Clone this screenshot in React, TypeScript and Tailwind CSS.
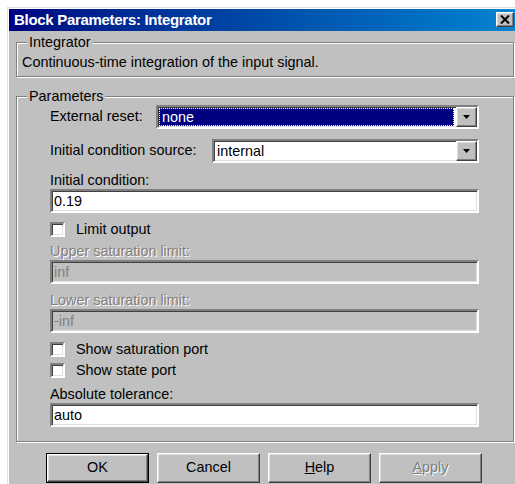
import React from "react";

// classic 3D borders
const SUNKEN =
  "border-2 border-t-[#808080] border-l-[#808080] border-b-white border-r-white shadow-[inset_1px_1px_0_#404040,inset_-1px_-1px_0_#dfdfdf]";
const RAISED =
  "border border-t-white border-l-white border-b-[#404040] border-r-[#404040] shadow-[inset_-1px_-1px_0_#808080,inset_1px_1px_0_#dfdfdf]";
const ETCHED =
  "border border-[#808080] shadow-[1px_1px_0_#fff,inset_1px_1px_0_#fff]";
const DISABLED_TEXT = "text-[#808080] [text-shadow:1px_1px_0_#fff]";

function DropButton() {
  return (
    <div
      className={`w-[21px] h-[20px] bg-[#c0c0c0] ${RAISED} flex items-center justify-center shrink-0`}
    >
      <svg width="9" height="5" viewBox="0 0 9 5">
        <path d="M1 0h7L4.5 4z" fill="#000" />
      </svg>
    </div>
  );
}

function Combo({
  value,
  focused,
  className,
}: {
  value: string;
  focused?: boolean;
  className?: string;
}) {
  return (
    <div className={`h-[24px] bg-white flex ${SUNKEN} ${className ?? ""}`}>
      {focused ? (
        <div className="flex-1 m-[1px] mr-[2px] bg-[#000080] text-white border border-dotted border-[#ffff99] pl-[2px] leading-[16px]">
          {value}
        </div>
      ) : (
        <div className="flex-1 pl-[3px] leading-[20px]">{value}</div>
      )}
      <DropButton />
    </div>
  );
}

function TextBox({ value, disabled }: { value: string; disabled?: boolean }) {
  return (
    <div
      className={`h-[24px] mt-[1px] pl-[2px] leading-[20px] ${SUNKEN} ${
        disabled ? "bg-[#c0c0c0] text-[#808080]" : "bg-white"
      }`}
    >
      {value}
    </div>
  );
}

function Check({ label, className }: { label: string; className?: string }) {
  return (
    <div className={`flex items-center h-[16px] ${className ?? ""}`}>
      <div className={`w-[15px] h-[15px] bg-white ${SUNKEN}`} />
      <span className="ml-[11px] leading-[16px]">{label}</span>
    </div>
  );
}

function Button({
  children,
  isDefault,
}: {
  children: React.ReactNode;
  isDefault?: boolean;
}) {
  return (
    <div
      className={`w-[103px] h-[30px] ${
        isDefault ? "border border-black" : ""
      } flex`}
    >
      <div
        className={`flex-1 ${RAISED} bg-[#c0c0c0] flex items-center justify-center`}
      >
        {children}
      </div>
    </div>
  );
}

export default function App() {
  return (
    <div className="w-[515px] h-[484px] bg-white pt-[7px] pl-[7px] overflow-hidden font-['Liberation_Sans',Arial,sans-serif] text-[14.4px] text-black">
      <div className="w-[510px] h-[490px] bg-[#c0c0c0] border-t border-l border-[#dfdfdf] shadow-[inset_1px_1px_0_#fff] pt-[1px] pl-[1px]">
        {/* title bar */}
        <div className="h-[22px] flex items-start bg-linear-to-r from-[#000080] to-[#1084d0]">
          <span className="pl-[5px] text-white font-bold text-[15px] tracking-[-0.3px] leading-[22px]">
            Block Parameters: Integrator
          </span>
          <div
            className={`ml-auto mr-[3px] mt-[3px] w-[18px] h-[15px] bg-[#c0c0c0] ${RAISED} flex items-center justify-center`}
          >
            <svg width="10" height="9" viewBox="0 0 10 9">
              <path
                d="M1 0.5L9 8.5M9 0.5L1 8.5"
                stroke="#000"
                strokeWidth="2"
              />
            </svg>
          </div>
        </div>

        <div className="pl-[7px] pr-[3px]">
          {/* description group */}
          <fieldset className={`mt-[3px] ${ETCHED} pl-[5px] pb-[6px]`}>
            <legend className="ml-[5px] px-[2px] leading-[16px] bg-[#c0c0c0]">
              Integrator
            </legend>
            <div className="pt-[4px] leading-[16px]">
              Continuous-time integration of the input signal.
            </div>
          </fieldset>

          {/* parameters group */}
          <fieldset className={`mt-[11px] ${ETCHED} pl-[5px] pb-[14px]`}>
            <legend className="ml-[5px] px-[2px] leading-[16px] bg-[#c0c0c0]">
              Parameters
            </legend>

            <div className="pl-[28px] pr-[34px]">
              <div className="mt-[1px] flex items-center">
                <span className="w-[106px] shrink-0">External reset:</span>
                <Combo value="none" focused className="flex-1" />
              </div>
              <div className="mt-[10px] flex items-center">
                <span className="w-[162px] shrink-0">
                  Initial condition source:
                </span>
                <Combo value="internal" className="flex-1" />
              </div>

              <div className="mt-[9px] leading-[16px]">Initial condition:</div>
              <TextBox value="0.19" />

              <Check label="Limit output" className="mt-[8px]" />

              <div className={`mt-[6px] leading-[16px] ${DISABLED_TEXT}`}>
                Upper saturation limit:
              </div>
              <TextBox value="inf" disabled />

              <div className={`mt-[8px] leading-[16px] ${DISABLED_TEXT}`}>
                Lower saturation limit:
              </div>
              <TextBox value="-inf" disabled />

              <Check label="Show saturation port" className="mt-[8px]" />
              <Check label="Show state port" className="mt-[5px]" />

              <div className="mt-[8px] leading-[16px]">Absolute tolerance:</div>
              <TextBox value="auto" />
            </div>
          </fieldset>

          {/* dialog buttons */}
          <div className="mt-[11px] ml-[30px] flex gap-[8px]">
            <Button isDefault>OK</Button>
            <Button>Cancel</Button>
            <Button>
              <span>
                <span className="underline">H</span>elp
              </span>
            </Button>
            <Button>
              <span className={DISABLED_TEXT}>
                <span className="underline">A</span>pply
              </span>
            </Button>
          </div>
        </div>
      </div>
    </div>
  );
}
